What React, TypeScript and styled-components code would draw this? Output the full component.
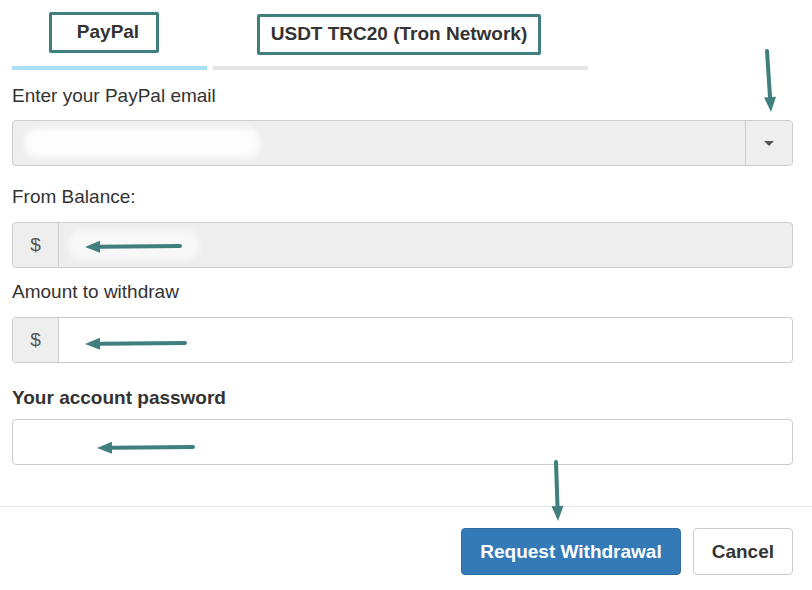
import React from "react";
import styled, { createGlobalStyle } from "styled-components";

const Global = createGlobalStyle`
  html, body { margin: 0; padding: 0; background: #fff; }
  body { font-family: "Liberation Sans", Arial, sans-serif; color: #333; }
`;

const Page = styled.div`
  position: relative;
  width: 812px;
  height: 590px;
  overflow: hidden;
`;

const Body = styled.div`
  padding: 0 19px 0 12px;
`;

const TabsRow = styled.div`
  display: flex;
  gap: 6px;
`;

const Tab = styled.div<{ $w: number; $active?: boolean; $x: number; $y: number }>`
  width: ${(p) => p.$w}px;
  height: 70px;
  box-sizing: border-box;
  border-bottom: 4px solid ${(p) => (p.$active ? "#a9e0f6" : "#e5e5e5")};
  padding-left: ${(p) => p.$x}px;
  padding-top: ${(p) => p.$y}px;
  display: flex;
  align-items: flex-start;
`;

const TabLabel = styled.div<{ $w: number; $shift?: number }>`
  width: ${(p) => p.$w}px;
  height: 41px;
  box-sizing: border-box;
  border: 3px solid #3f7f7e;
  border-radius: 2px;
  display: flex;
  align-items: center;
  justify-content: center;
  font-weight: bold;
  font-size: 19px;
  color: #333;
  padding-bottom: 2px;
  padding-left: ${(p) => p.$shift ?? 0}px;
`;

const Field = styled.div<{ $top: number }>`
  margin-top: ${(p) => p.$top}px;
`;

const Label = styled.div<{ $bold?: boolean; $gap: number }>`
  font-size: 19px;
  line-height: 20px;
  font-weight: ${(p) => (p.$bold ? "bold" : "normal")};
  color: #333;
  margin-bottom: ${(p) => p.$gap}px;
`;

const Group = styled.div<{ $bg?: string }>`
  display: flex;
  height: 46px;
  box-sizing: border-box;
  border: 1px solid #ccc;
  border-radius: 4px;
  background: ${(p) => p.$bg ?? "#fff"};
  overflow: hidden;
`;

const Addon = styled.div<{ $w: number; $left?: boolean }>`
  width: ${(p) => p.$w}px;
  flex: none;
  display: flex;
  align-items: center;
  justify-content: center;
  background: #eee;
  ${(p) => (p.$left ? "border-left: 1px solid #ccc;" : "border-right: 1px solid #ccc;")}
  color: #555;
  font-size: 19px;
`;

const Control = styled.div<{ $pad: number }>`
  flex: 1;
  display: flex;
  align-items: center;
  padding-left: ${(p) => p.$pad}px;
`;

const Redacted = styled.div<{ $w: number; $o: number }>`
  width: ${(p) => p.$w}px;
  height: 30px;
  border-radius: 12px;
  background: rgba(255, 255, 255, ${(p) => p.$o});
  filter: blur(3px);
`;

const Caret = styled.span`
  width: 0;
  height: 0;
  border-left: 5px solid transparent;
  border-right: 5px solid transparent;
  border-top: 5px solid #555;
`;

const Divider = styled.div`
  margin-top: 41px;
  height: 1px;
  background: #e5e5e5;
`;

const Footer = styled.div`
  display: flex;
  justify-content: flex-end;
  gap: 12px;
  padding: 21px 19px 0 0;
`;

const Button = styled.button<{ $primary?: boolean }>`
  height: 47px;
  box-sizing: border-box;
  padding: 0 18px;
  border-radius: 4px;
  font-family: "Liberation Sans", Arial, sans-serif;
  font-weight: bold;
  font-size: 19px;
  border: 1px solid ${(p) => (p.$primary ? "#2e6da4" : "#ccc")};
  background: ${(p) => (p.$primary ? "#337ab7" : "#fff")};
  color: ${(p) => (p.$primary ? "#fff" : "#333")};
`;

const Overlay = styled.svg`
  position: absolute;
  left: 0;
  top: 0;
  pointer-events: none;
`;

const TEAL = "#3f7f7e";

function Arrow({ x1, y1, x2, y2 }: { x1: number; y1: number; x2: number; y2: number }) {
  const dx = x2 - x1;
  const dy = y2 - y1;
  const len = Math.hypot(dx, dy);
  const ux = dx / len;
  const uy = dy / len;
  const hl = 15;
  const hw = 6;
  const bx = x2 - ux * hl;
  const by = y2 - uy * hl;
  const px = -uy;
  const py = ux;
  return (
    <g>
      <line x1={x1} y1={y1} x2={bx} y2={by} stroke={TEAL} strokeWidth={4} strokeLinecap="round" />
      <polygon
        points={`${x2},${y2} ${bx + px * hw},${by + py * hw} ${bx - px * hw},${by - py * hw}`}
        fill={TEAL}
      />
    </g>
  );
}

export default function App() {
  return (
    <Page>
      <Global />
      <Body>
        <TabsRow>
          <Tab $w={195} $active $x={37} $y={12}>
            <TabLabel $w={110} $shift={8}>PayPal</TabLabel>
          </Tab>
          <Tab $w={375} $x={44} $y={14}>
            <TabLabel $w={284}>USDT TRC20 (Tron Network)</TabLabel>
          </Tab>
        </TabsRow>

        <Field $top={16}>
          <Label $gap={14}>Enter your PayPal email</Label>
          <Group $bg="#eee">
            <Control $pad={12}>
              <Redacted $w={235} $o={0.85} />
            </Control>
            <Addon $w={46} $left>
              <Caret />
            </Addon>
          </Group>
        </Field>

        <Field $top={21}>
          <Label $gap={15}>From Balance:</Label>
          <Group $bg="#eee">
            <Addon $w={45}>$</Addon>
            <Control $pad={10}>
              <Redacted $w={130} $o={0.6} />
            </Control>
          </Group>
        </Field>

        <Field $top={14}>
          <Label $gap={15}>Amount to withdraw</Label>
          <Group>
            <Addon $w={45}>$</Addon>
            <Control $pad={10} />
          </Group>
        </Field>

        <Field $top={25}>
          <Label $bold $gap={11}>Your account password</Label>
          <Group>
            <Control $pad={12} />
          </Group>
        </Field>
      </Body>

      <Divider />
      <Footer>
        <Button $primary>Request Withdrawal</Button>
        <Button>Cancel</Button>
      </Footer>

      <Overlay width={812} height={590} viewBox="0 0 812 590">
        <Arrow x1={767} y1={51} x2={771} y2={112} />
        <Arrow x1={180} y1={246} x2={85} y2={247} />
        <Arrow x1={185} y1={343} x2={85} y2={344} />
        <Arrow x1={193} y1={447} x2={97} y2={448} />
        <Arrow x1={556} y1={462} x2={558} y2={521} />
      </Overlay>
    </Page>
  );
}
